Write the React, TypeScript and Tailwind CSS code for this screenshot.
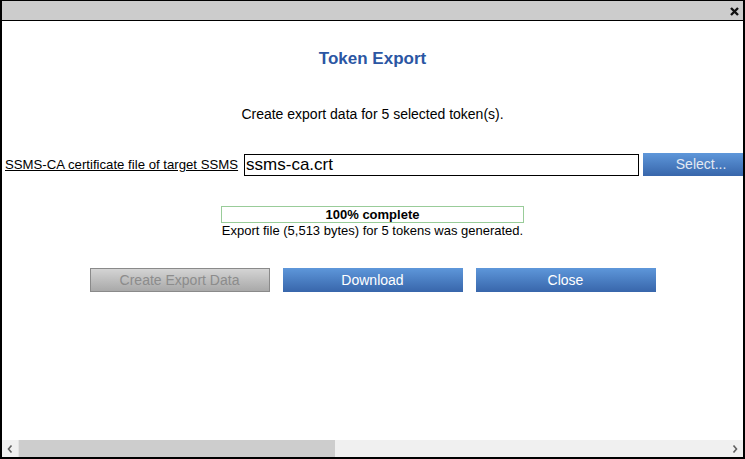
export default function App() {
    return (
        <div className="w-[745px] h-[459px] bg-white font-['Liberation_Sans',Arial,sans-serif] text-black">
            <div className="flex h-full w-full flex-col border-x-2 border-t border-b-2 border-black">
                {/* title bar */}
                <div className="flex h-[20px] shrink-0 items-center justify-end border-b border-black bg-[#cccccc] pr-[4px]">
                    <svg width="9" height="9" viewBox="0 0 9 9" className="mt-[1px]">
                        <path d="M1 1 L8 8 M8 1 L1 8" stroke="#111" strokeWidth="2.4" />
                    </svg>
                </div>

                <div className="flex min-h-0 flex-1 flex-col overflow-hidden">
                    <div className="flex flex-col items-center">
                        <h1 className="mt-[28px] text-[17px] font-bold leading-[20px] text-[#2b56a3]">
                            Token Export
                        </h1>
                        <p className="mt-[37px] text-[14px] leading-[16px]">
                            Create export data for 5 selected token(s).
                        </p>
                    </div>

                    <div className="mt-[31px] flex w-[880px] items-center pl-[3px]">
                        <span className="text-[13.2px] leading-[15px] underline">
                            SSMS-CA certificate file of target SSMS
                        </span>
                        <div className="ml-[6px] flex h-[22px] w-[395px] items-center border border-black px-[1px] text-[17px] leading-none">
                            ssms-ca.crt
                        </div>
                        <button className="ml-[4px] h-[23px] w-[116px] bg-gradient-to-b from-[#5e97da] to-[#3866ab] text-[14px] text-[#e3e9f2]">
                            Select...
                        </button>
                    </div>

                    <div className="flex flex-col items-center">
                        <div className="mt-[30px] flex h-[17px] w-[303px] items-center justify-center border border-[#99cc99] text-[13px] font-bold">
                            100% complete
                        </div>
                        <p className="mt-[1px] text-[13px] leading-[14px]">
                            Export file (5,513 bytes) for 5 tokens was generated.
                        </p>

                        <div className="mt-[30px] flex gap-[13px]">
                            <button className="h-[24px] w-[180px] border border-[#8a8a8a] bg-gradient-to-b from-[#d4d4d4] to-[#a9a9a9] text-[14px] text-[#8c8c8c]">
                                Create Export Data
                            </button>
                            <button className="h-[24px] w-[180px] bg-gradient-to-b from-[#5e97da] to-[#3866ab] text-[14px] text-white">
                                Download
                            </button>
                            <button className="h-[24px] w-[180px] bg-gradient-to-b from-[#5e97da] to-[#3866ab] text-[14px] text-white">
                                Close
                            </button>
                        </div>
                    </div>
                </div>

                {/* horizontal scrollbar */}
                <div className="flex h-[17px] shrink-0 bg-[#f0f0f0]">
                    <div className="flex w-[17px] items-center justify-center border-r border-[#e4e4e4]">
                        <svg width="6" height="8" viewBox="0 0 6 8">
                            <path d="M4.5 0.5 L1.5 4 L4.5 7.5" stroke="#606060" strokeWidth="1.6" fill="none" />
                        </svg>
                    </div>
                    <div className="flex-1">
                        <div className="h-full w-[316px] bg-[#cdcdcd]" />
                    </div>
                    <div className="flex w-[17px] items-center justify-center">
                        <svg width="6" height="8" viewBox="0 0 6 8">
                            <path d="M1.5 0.5 L4.5 4 L1.5 7.5" stroke="#606060" strokeWidth="1.6" fill="none" />
                        </svg>
                    </div>
                </div>
            </div>
        </div>
    );
}
